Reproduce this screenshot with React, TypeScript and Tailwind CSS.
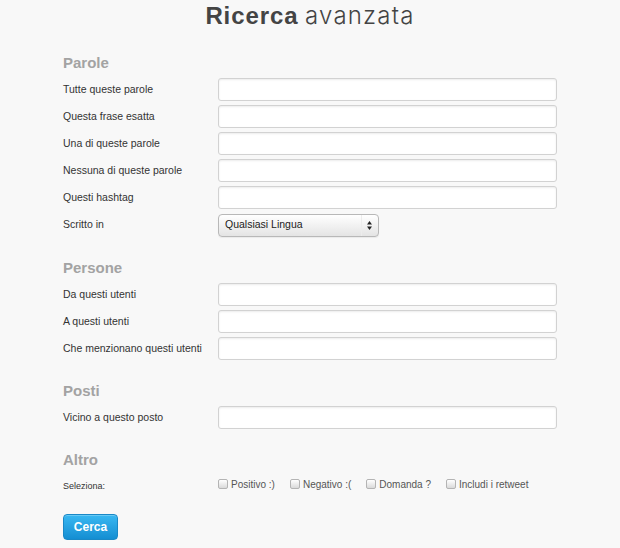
import React from "react";

const inputCls =
  "w-[339px] h-[23px] bg-white border border-[#d2d2d2] rounded-[3px] shadow-[inset_0_1px_2px_rgba(0,0,0,0.08)] outline-none";

function Row({ label, children }: { label: string; children?: React.ReactNode }) {
  return (
    <div className="flex items-center h-[23px]">
      <label className="w-[155px] shrink-0 text-[10.5px] text-[#333]">{label}</label>
      {children ?? <input type="text" className={inputCls} />}
    </div>
  );
}

function Header({ children }: { children: React.ReactNode }) {
  return <h2 className="text-[15px] leading-[20px] font-bold text-[#a3a3a3] mb-[5px]">{children}</h2>;
}

function Check({ label }: { label: string }) {
  return (
    <label className="flex items-center gap-[3px] text-[10px] text-[#555]">
      <input
        type="checkbox"
        className="appearance-none m-0 w-[10px] h-[10px] rounded-[2px] border border-[#b4b4b4] bg-linear-to-b from-white to-[#dadada]"
      />
      <span>{label}</span>
    </label>
  );
}

export default function App() {
  return (
    <div className="w-[620px] h-[548px] overflow-hidden bg-[#f8f8f8] font-['Liberation_Sans',Arial,sans-serif]">
      <h1 className="pt-px text-center text-[24px] leading-[30px] text-[#444]">
        <span className="font-bold tracking-[0.9px]">Ricerca</span>{" "}
        <span className="font-['Inter',sans-serif] font-light tracking-[1.2px]">avanzata</span>
      </h1>

      <form className="pl-[63px] mt-[22px] flex flex-col">
        <section>
          <Header>Parole</Header>
          <div className="flex flex-col gap-[4px]">
            <Row label="Tutte queste parole" />
            <Row label="Questa frase esatta" />
            <Row label="Una di queste parole" />
            <Row label="Nessuna di queste parole" />
            <Row label="Questi hashtag" />
            <Row label="Scritto in">
              <div className="w-[161px] h-[23px] mt-[1px] flex items-center justify-between rounded-[4px] border border-[#b8b8b8] bg-linear-to-b from-white to-[#e4e4e4] shadow-[0_1px_1px_rgba(0,0,0,0.06)]">
                <span className="pl-[6px] text-[10.5px] text-[#222]">Qualsiasi Lingua</span>
                <div className="h-full flex items-center border-l border-[#ececec] pl-[5px] pr-[6px]">
                  <svg width="5" height="9" viewBox="0 0 5 9">
                    <path d="M2.5 0 L5 3.5 L0 3.5 Z" fill="#222" />
                    <path d="M0 5.5 L5 5.5 L2.5 9 Z" fill="#222" />
                  </svg>
                </div>
              </div>
            </Row>
          </div>
        </section>

        <section className="mt-[22px]">
          <Header>Persone</Header>
          <div className="flex flex-col gap-[4px]">
            <Row label="Da questi utenti" />
            <Row label="A questi utenti" />
            <Row label="Che menzionano questi utenti" />
          </div>
        </section>

        <section className="mt-[21px]">
          <Header>Posti</Header>
          <div className="flex flex-col gap-[4px]">
            <Row label="Vicino a questo posto" />
          </div>
        </section>

        <section className="mt-[21px]">
          <Header>Altro</Header>
          <div className="flex items-center h-[20px]">
            <span className="w-[155px] shrink-0 pt-[4px] text-[9px] text-[#333]">Seleziona:</span>
            <div className="flex items-center gap-[15px] -mt-[2px]">
              <Check label="Positivo :)" />
              <Check label="Negativo :(" />
              <Check label="Domanda ?" />
              <Check label="Includi i retweet" />
            </div>
          </div>
        </section>

        <div className="mt-[19px]">
          <button
            type="button"
            className="w-[55px] h-[26px] rounded-[4px] border border-[#1a88c6] bg-linear-to-b from-[#38b8f2] to-[#138ed2] text-white font-bold text-[12px] shadow-[inset_0_1px_0_rgba(255,255,255,0.25)]"
          >
            Cerca
          </button>
        </div>
      </form>
    </div>
  );
}
